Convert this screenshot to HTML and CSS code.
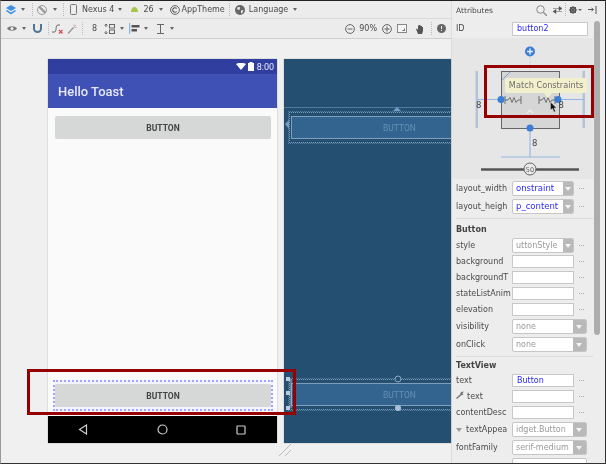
FILE: index.html
```html
<!DOCTYPE html>
<html lang="en">
<head>
    <meta charset="UTF-8">
    <meta name="viewport" content="width=device-width, initial-scale=1.0">
    <title>Layout Editor</title>
    <link rel="stylesheet" href="styles.css">
</head>
<body>
<div class="app">
    <div class="main">
        <div class="toolbar">
            <svg class="ml5" width="10" height="10" viewBox="0 0 10 10"><path d="M5 0L10 3 5 6 0 3z" fill="#3d8fe0"/><path d="M1 5L5 7.4 9 5 10 6 5 9.5 0 6z" fill="#3d8fe0"/></svg>
            <i class="caret ml5"></i>
            <i class="sep ml7"></i>
            <svg class="ml4" width="10" height="10" viewBox="0 0 10 10"><circle cx="5" cy="5" r="4.5" fill="none" stroke="#999"/><path d="M2 1.500L8.500 8" stroke="#999" stroke-width="2.400"/></svg>
            <i class="caret ml6"></i>
            <i class="sep ml6"></i>
            <svg class="ml6" width="7" height="11" viewBox="0 0 7 11"><rect x=".5" y=".5" width="6" height="10" rx="1" fill="#eee" stroke="#777"/></svg>
            <span class="ml5">Nexus 4</span>
            <i class="caret ml4"></i>
            <svg class="ml9" width="7" height="5" viewBox="0 0 7 5"><path d="M0 5C0 2 1.500 0 3.500 0S7 2 7 5z" fill="#a6c648"/></svg>
            <span class="ml5">26</span>
            <i class="caret ml5"></i>
            <svg class="ml7" width="10" height="10" viewBox="0 0 10 10"><circle cx="5" cy="5" r="4.400" fill="none" stroke="#666"/><path d="M6.700 3.500A2.300 2.300 0 1 0 6.700 6.500" fill="none" stroke="#555" stroke-width="1.100"/></svg>
            <span class="ml2">AppTheme</span>
            <i class="sep ml4"></i>
            <svg class="ml5" width="10" height="10" viewBox="0 0 10 10"><circle cx="5" cy="5" r="5" fill="#666"/><path d="M2 2.500L5 2 4.500 5 2.500 4.500zM6 5.500L8.500 5 7 8.500 6 8z" fill="#eee"/></svg>
            <span class="ml4">Language</span>
            <i class="caret ml5"></i>
        </div>
        <div class="toolbar toolbar-second">
            <svg class="ml6" width="10" height="7" viewBox="0 0 10 7"><path d="M0 3.500C2 .5 8 .5 10 3.500 8 6.500 2 6.500 0 3.500z" fill="#777"/><circle cx="5" cy="3.500" r="1.500" fill="#eee"/></svg>
            <i class="caret ml5"></i>
            <svg class="ml7" width="9" height="9" viewBox="0 0 9 9"><path d="M1 0V4.500A3.500 3.500 0 0 0 8 4.500V0" fill="none" stroke="#4d7596" stroke-width="2"/></svg>
            <i class="sep ml6"></i>
            <svg class="ml3" width="11" height="11" viewBox="0 0 11 11"><path d="M0 9H2.500C5 9 3 2 6 2H8" fill="none" stroke="#666"/><path d="M7 7L10.500 10.500M10.500 7L7 10.500" stroke="#d9494f" stroke-width="1.200"/></svg>
            <svg class="ml4" width="10" height="10" viewBox="0 0 10 10"><path d="M1 9.500L6.500 3.500" stroke="#999" stroke-width="1.400"/><path d="M7 .5V2.500M9.500 3.500H7.500M9 1L7.500 2.500" stroke="#c8a8a0"/></svg>
            <i class="sep ml5"></i>
            <span class="ml9">8</span>
            <svg class="ml7" width="11" height="10" viewBox="0 0 11 10"><path d="M2 0V3M.5 1.500L2 0 3.500 1.500M2 10V7M.5 8.500L2 10 3.500 8.500" fill="none" stroke="#666"/><rect x="5.500" y=".5" width="5" height="3.500" fill="none" stroke="#666"/><rect x="5.500" y="6" width="5" height="3.500" fill="none" stroke="#666"/></svg>
            <i class="caret ml5"></i>
            <svg class="ml5" width="11" height="11" viewBox="0 0 11 11"><path d="M.5 0V11" stroke="#86b7e0" stroke-width="1.400"/><path d="M2.500 2H10.500V4.500H2.500zM2.500 6H8V8.500H2.500z" fill="#555"/></svg>
            <i class="caret ml4"></i>
            <svg class="ml9" width="7" height="10" viewBox="0 0 7 10"><path d="M0 .5H7M0 9.500H7M3.500 .5V9.500" stroke="#666"/></svg>
            <i class="caret ml6"></i>
            <div class="zoom-tools">
                <svg width="10" height="10" viewBox="0 0 10 10"><circle cx="5" cy="5" r="4.400" fill="none" stroke="#666"/><path d="M2.500 5H7.500" stroke="#666"/></svg>
                <span class="ml4">90%</span>
                <svg class="ml5" width="10" height="10" viewBox="0 0 10 10"><circle cx="5" cy="5" r="4.400" fill="none" stroke="#666"/><path d="M2.500 5H7.500M5 2.500V7.500" stroke="#666"/></svg>
                <svg class="ml5" width="10" height="9" viewBox="0 0 10 9"><rect x=".5" y=".5" width="9" height="8" fill="#f6f6f6" stroke="#888"/><path d="M5.500 6.500H7.500V4.500" fill="none" stroke="#666"/></svg>
                <svg class="ml8" width="10" height="10" viewBox="0 0 10 10"><path d="M1 5L2 4.500 3 6V1.500H4V1H5V1.500H6V2H7V3H8V7L7 10H3z" fill="#555"/></svg>
                <i class="sep ml6"></i>
                <svg class="ml5" width="9" height="9" viewBox="0 0 9 9"><circle cx="4.500" cy="4.500" r="4.500" fill="#666"/><path d="M4.500 2V5M4.500 6V7" stroke="#eee"/></svg>
            </div>
        </div>
        <div class="canvas">
            <div class="phone">
                <div class="status-bar">
                    <svg width="10" height="7" viewBox="0 0 10 7"><path d="M0 1C3 -.5 7 -.5 10 1L5 7z" fill="#fff"/></svg>
                    <svg class="battery" width="6" height="9" viewBox="0 0 6 9"><path d="M1.500 0H4.500V1H6V9H0V1H1.500z" fill="#fff"/></svg>
                    <span>8:00</span>
                </div>
                <div class="app-bar">Hello Toast</div>
                <div class="screen">
                    <div class="android-button">BUTTON</div>
                    <div class="selection">
                        <div class="android-button">BUTTON</div>
                    </div>
                </div>
                <div class="nav-bar">
                    <svg width="10" height="11" viewBox="0 0 10 11"><path d="M8.500 1V10L1.500 5.500z" fill="none" stroke="#ccc" stroke-width="1.200"/></svg>
                    <svg width="11" height="11" viewBox="0 0 11 11"><circle cx="5.500" cy="5.500" r="4.500" fill="none" stroke="#ccc" stroke-width="1.200"/></svg>
                    <svg width="10" height="10" viewBox="0 0 10 10"><rect x="1" y="1" width="8" height="8" rx=".5" fill="none" stroke="#ccc" stroke-width="1.200"/></svg>
                </div>
            </div>
            <div class="blueprint">
                <div class="bp-top-line"></div>
                <div class="bp-button bp-button-top">BUTTON</div>
                <div class="bp-button bp-button-bottom">BUTTON</div>
                <svg class="bp-marks" width="167" height="382" viewBox="0 0 167 382">
                    <path d="M113 48L109 52H117zM1 65L5 61V70z" fill="#6f9fc8"/>
                    <circle cx="114" cy="320" r="3" fill="#244f70" stroke="#8aa8c4"/>
                    <circle cx="114" cy="349" r="3" fill="#a9c0d6"/>
                    <path d="M7 320V349" stroke="#9db6cd"/>
                    <rect x="2" y="318" width="4" height="4" fill="#b9cbdc"/>
                    <rect x="2" y="332" width="4" height="4" fill="#b9cbdc"/>
                    <rect x="2" y="347" width="4" height="4" fill="#b9cbdc"/>
                </svg>
            </div>
            <svg class="grip" width="13" height="13" viewBox="0 0 13 13"><path d="M0 12L12 0M6 12L12 6" stroke="#bbb"/></svg>
        </div>
    </div>
    <div class="attributes">
        <div class="attr-header">
            <span>Attributes</span>
            <svg class="ml-auto" width="11" height="11" viewBox="0 0 11 11"><circle cx="4.500" cy="4.500" r="3.800" fill="none" stroke="#888"/><path d="M7.500 7.500L11 11" stroke="#888" stroke-width="1.300"/></svg>
            <svg class="ml6" width="9" height="8" viewBox="0 0 9 8"><path d="M2 5.500H9M0 5.500L3 3.500V7.500zM0 2.500H7M9 2.500L6 .5V4.500z" fill="#555" stroke="#555" stroke-width=".5"/></svg>
            <i class="sep ml3"></i>
            <svg class="ml3" width="8" height="8" viewBox="0 0 8 8"><circle cx="4" cy="4" r="2.500" fill="none" stroke="#555" stroke-width="1.600"/><path d="M4 0V8M0 4H8M1 1L7 7M7 1L1 7" stroke="#555"/></svg>
            <i class="caret caret-small ml1"></i>
            <svg class="ml6" width="9" height="9" viewBox="0 0 9 9"><path d="M0 3.500H5M3.500 2L5.500 3.500 3.500 5M8 0V8" fill="none" stroke="#555"/></svg>
        </div>
        <div class="attr-body">
            <div class="attr-fields">
                <div class="id-row">
                    <span class="label">ID</span>
                    <div class="field field-id">button2</div>
                </div>
                <div class="widget">
                    <svg width="141" height="141" viewBox="0 0 141 141">
                        <path d="M24.500 33V90M131.500 33V90" stroke="#d4d4d4" stroke-width="3"/>
                        <path d="M25 33V90M132 33V90M25 61.500H49M106 61.500H132M78 90V119M49 119H108" stroke="#94b6e4" stroke-width="1.100" fill="none"/>
                        <path d="M78 19V33" stroke="#a8c4e6" stroke-dasharray="1 1.500"/>
                        <circle cx="78" cy="13.500" r="5" fill="#3b7ed6"/>
                        <path d="M75 13.500H81M78 10.500V16.500" stroke="#e8eef8" stroke-width="1.400"/>
                        <rect x="49.500" y="33.500" width="58" height="57" fill="#d6d6d6" stroke="#666"/>
                        <path d="M50 42L58 34" stroke="#7aa5dc"/>
                        <path d="M75 75L78 72 81 75" fill="none" stroke="#f0f0f0" stroke-width="1.200"/>
                        <path d="M53 58V66M53 62H56L58 59.500 60 64.500 62 59.500 64 64.500 66 62H69M69 58V66M87 58V66M87 62H90L92 59.500 94 64.500 96 59.500 98 64.500 100 62H103M103 58V66" fill="none" stroke="#555" stroke-width=".8"/>
                        <circle cx="49" cy="61.500" r="3.500" fill="#3b7ed6"/>
                        <circle cx="106" cy="61.500" r="3.500" fill="#3b7ed6"/>
                        <circle cx="78" cy="90" r="3.500" fill="#3b7ed6"/>
                        <text x="24" y="70" class="widget-num">8</text>
                        <text x="106.500" y="70" class="widget-num">8</text>
                        <text x="80" y="108" class="widget-num">8</text>
                        <path d="M29 131.500H127" stroke="#555" stroke-width="2.400"/>
                        <circle cx="78" cy="131" r="6" fill="#e8e8e8" stroke="#666"/>
                        <text x="78" y="133.500" class="widget-slider">50</text>
                    </svg>
                </div>
                <div class="row row-select">
                    <span class="label">layout_width</span>
                    <div class="select select-short"><span class="value">onstraint</span><i class="select-arrow"></i></div>
                    <i class="more"></i>
                </div>
                <div class="row row-select">
                    <span class="label">layout_heigh</span>
                    <div class="select select-short"><span class="value">p_content</span><i class="select-arrow"></i></div>
                    <i class="more"></i>
                </div>
                <div class="divider"></div>
                <div class="heading">Button</div>
                <div class="row">
                    <span class="label">style</span>
                    <div class="select select-short"><span class="value value-gray">uttonStyle</span><i class="select-arrow"></i></div>
                    <i class="more"></i>
                </div>
                <div class="row">
                    <span class="label">background</span>
                    <div class="field"></div>
                    <i class="more"></i>
                </div>
                <div class="row">
                    <span class="label">backgroundT</span>
                    <div class="field"></div>
                    <i class="more"></i>
                </div>
                <div class="row">
                    <span class="label">stateListAnim</span>
                    <div class="field"></div>
                    <i class="more"></i>
                </div>
                <div class="row">
                    <span class="label">elevation</span>
                    <div class="field"></div>
                    <i class="more"></i>
                </div>
                <div class="row row-select">
                    <span class="label">visibility</span>
                    <div class="select"><span class="value value-gray">none</span><i class="select-arrow"></i></div>
                </div>
                <div class="row row-select">
                    <span class="label">onClick</span>
                    <div class="select"><span class="value value-gray">none</span><i class="select-arrow"></i></div>
                </div>
                <div class="divider"></div>
                <div class="heading heading-tight">TextView</div>
                <div class="row">
                    <span class="label">text</span>
                    <div class="field field-blue">Button</div>
                    <i class="more"></i>
                </div>
                <div class="row">
                    <span class="label"><svg class="wrench" width="8" height="8" viewBox="0 0 8 8"><path d="M0 7L4 3.500 5 1 8 .5 6.500 2.500 7.500 3.500 5 4.500 1 8z" fill="#777"/></svg>text</span>
                    <div class="field"></div>
                    <i class="more"></i>
                </div>
                <div class="row">
                    <span class="label">contentDesc</span>
                    <div class="field"></div>
                    <i class="more"></i>
                </div>
                <div class="row row-select">
                    <span class="label"><i class="tree-arrow"></i>textAppea</span>
                    <div class="select"><span class="value value-gray">idget.Button</span><i class="select-arrow"></i></div>
                </div>
                <div class="row row-select">
                    <span class="label">fontFamily</span>
                    <div class="select"><span class="value value-gray">serif-medium</span><i class="select-arrow"></i></div>
                </div>
                <div class="row row-select">
                    <div class="spacer-label"></div>
                    <div class="select"></div>
                </div>
            </div>
            <div class="scrollbar"><div class="scroll-thumb"></div></div>
        </div>
    </div>
    <div class="callout callout-widget"></div>
    <div class="callout callout-button"></div>
    <div class="tooltip">Match Constraints</div>
    <svg class="cursor" width="7" height="10" viewBox="0 0 7 10"><path d="M.5 0V8L2.500 6.500 4 10 5.500 9.300 4 6H6.500z" fill="#111" stroke="#eee" stroke-width=".4"/></svg>
</div>
</body>
</html>
```

FILE: styles.css
```css
html, body {
    margin: 0;
    padding: 0;
}
body {
    width: 606px;
    height: 464px;
    overflow: hidden;
    font-family: "DejaVu Sans", sans-serif;
    font-size: 8px;
    color: #4a4a4a;
}
.app {
    position: relative;
    display: flex;
    box-sizing: border-box;
    width: 606px;
    height: 464px;
    background: #f0f0f0;
    border-top: 1px solid #222;
    border-bottom: 1px solid #333;
    border-left: 1px solid #999;
    border-right: 1px solid #333;
    filter: blur(0.35px);
}
.main {
    display: flex;
    flex-direction: column;
    width: 450px;
    flex-shrink: 0;
}

/* toolbars */
.toolbar {
    display: flex;
    align-items: center;
    flex-shrink: 0;
    height: 17px;
    background: #ececec;
    border-bottom: 1px solid #dadada;
    box-sizing: content-box;
}
.toolbar-second {
    height: 19px;
    border-bottom-color: #cfcfcf;
}
.zoom-tools {
    display: flex;
    align-items: center;
    margin-left: auto;
    margin-right: 5px;
}
.caret {
    width: 0;
    height: 0;
    border-left: 2.5px solid transparent;
    border-right: 2.5px solid transparent;
    border-top: 3px solid #666;
}
.caret-small {
    border-left-width: 2px;
    border-right-width: 2px;
    border-top-width: 2px;
}
.sep {
    width: 1px;
    height: 14px;
    background-image: linear-gradient(#bbb 50%, transparent 50%);
    background-size: 1px 2px;
}
.ml1 { margin-left: 1px; }
.ml2 { margin-left: 2px; }
.ml3 { margin-left: 3px; }
.ml4 { margin-left: 4px; }
.ml5 { margin-left: 5px; }
.ml6 { margin-left: 6px; }
.ml7 { margin-left: 7px; }
.ml8 { margin-left: 8px; }
.ml9 { margin-left: 9px; }
.ml-auto { margin-left: auto; }

/* canvas */
.canvas {
    position: relative;
    display: flex;
    flex: 1;
    gap: 7px;
    padding: 20px 0 20px 47px;
    min-height: 0;
}
.phone {
    display: flex;
    flex-direction: column;
    width: 229px;
    flex-shrink: 0;
    font-family: Roboto, sans-serif;
    box-shadow: 0 0 1px #888;
}
.status-bar {
    display: flex;
    align-items: center;
    justify-content: flex-end;
    gap: 2px;
    height: 15px;
    padding-right: 3px;
    background: #303f9f;
    color: #e8e8f4;
    font-size: 9px;
}
.battery {
    margin-right: 1px;
}
.app-bar {
    display: flex;
    align-items: center;
    height: 34px;
    padding-left: 10px;
    background: #3f51b5;
    color: #e6e8f6;
    font-size: 13px;
    font-weight: 500;
}
.screen {
    display: flex;
    flex-direction: column;
    justify-content: space-between;
    flex: 1;
    padding: 8px 6px 5px 7px;
    background: #fafafa;
}
.android-button {
    display: flex;
    align-items: center;
    justify-content: center;
    height: 23px;
    background: #d6d7d7;
    border-radius: 2px;
    color: #444;
    font-size: 8.500px;
    font-weight: 700;
}
.selection {
    margin: 0 -2px;
    padding: 2px 0;
    border: 2px dotted #a2a2ff;
    background: #f4f4ff;
}
.nav-bar {
    display: flex;
    align-items: center;
    justify-content: space-between;
    height: 27px;
    padding: 0 31px 0 30px;
    background: #000;
}
.blueprint {
    position: relative;
    flex: 1;
    overflow: hidden;
    background: #244f70;
    font-family: Roboto, sans-serif;
    box-shadow: 0 0 1px #888;
}
.bp-top-line {
    height: 1px;
    margin-top: 48px;
    background: #4f7b9d;
}
.bp-button {
    position: absolute;
    left: 7px;
    right: -10px;
    display: flex;
    align-items: center;
    box-sizing: border-box;
    height: 23px;
    padding-left: 91px;
    background: #32648f;
    border: 1px solid #7f9fbc;
    color: #6590b6;
    font-size: 8.500px;
}
.bp-button::before {
    content: "";
    position: absolute;
    left: -3px;
    right: 0;
    top: -5px;
    bottom: -5px;
    border: 1px dotted #7d9fbc;
    outline: 1px dotted #55809f;
}
.bp-button-top {
    top: 57px;
}
.bp-button-bottom {
    top: 324px;
}
.bp-marks {
    position: absolute;
    left: 0;
    top: 0;
}
.grip {
    position: absolute;
    left: 278px;
    bottom: 6px;
}

/* attributes panel */
.attributes {
    display: flex;
    flex-direction: column;
    flex: 1;
    min-width: 0;
    border-left: 1px solid #dcdcdc;
    background: #ededed;
}
.attr-header {
    display: flex;
    align-items: center;
    flex-shrink: 0;
    height: 18px;
    padding: 0 8px 0 4px;
    font-size: 7.500px;
}
.attr-body {
    display: flex;
    flex: 1;
    min-height: 0;
}
.attr-fields {
    width: 141px;
    overflow: hidden;
    flex-shrink: 0;
}
.id-row {
    display: flex;
    align-items: center;
    height: 19px;
}
.label {
    display: block;
    flex-shrink: 0;
    box-sizing: border-box;
    width: 60px;
    padding-left: 4px;
    overflow: hidden;
    white-space: nowrap;
}
.widget {
    height: 141px;
    background: #e6e6e6;
}
.widget svg {
    display: block;
}
.widget-num {
    fill: #444;
    font-size: 8.500px;
}
.widget-slider {
    fill: #666;
    font-size: 6.500px;
    text-anchor: middle;
}
.row {
    display: flex;
    align-items: center;
    height: 16px;
}
.row-select {
    height: 18px;
}
.spacer-label {
    width: 60px;
    flex-shrink: 0;
}
.field {
    box-sizing: border-box;
    width: 62px;
    height: 13px;
    padding-left: 4px;
    background: #fff;
    border: 1px solid #c8c8c8;
    color: #2a2aff;
    line-height: 11px;
}
.field-id {
    width: 76px;
    height: 14px;
    line-height: 12px;
}
.select {
    display: flex;
    box-sizing: border-box;
    width: 75px;
    height: 15px;
    overflow: hidden;
    background: #fff;
    border: 1px solid #c6c6c6;
    border-radius: 2px;
}
.select-short {
    width: 62px;
}
.select-arrow {
    position: relative;
    width: 13px;
    flex-shrink: 0;
    background: #b9b9b9;
}
.select-arrow::after {
    content: "";
    position: absolute;
    left: 3px;
    top: 5px;
    border-left: 3px solid transparent;
    border-right: 3px solid transparent;
    border-top: 4px solid #f4f4f4;
}
.select-short .select-arrow {
    width: 10px;
}
.select-short .select-arrow::after {
    left: 2px;
}
.value {
    display: flex;
    flex: 1;
    min-width: 0;
    padding-left: 3px;
    overflow: hidden;
    align-items: center;
    white-space: nowrap;
    color: #2a2aff;
    font-size: 8.500px;
}
.value-gray {
    color: #999;
    font-size: 8px;
}
.more {
    width: 5px;
    height: 1px;
    margin-left: 5px;
    background-image: linear-gradient(90deg, #aaa 50%, transparent 50%);
    background-size: 2px 1px;
}
.divider {
    height: 1px;
    margin: 3px 0 3px 4px;
    background: #dcdcdc;
}
.heading {
    height: 15px;
    padding-left: 4px;
    font-weight: bold;
    line-height: 15px;
    color: #444;
}
.heading-tight {
    height: 12px;
    line-height: 12px;
}
.wrench {
    margin-right: 3px;
}
.tree-arrow {
    display: inline-block;
    margin-right: 4px;
    border-left: 3px solid transparent;
    border-right: 3px solid transparent;
    border-top: 4px solid #999;
}
.scrollbar {
    flex: 1;
    padding-left: 1px;
}
.scroll-thumb {
    width: 6px;
    height: 314px;
    margin-top: 2px;
    background: #adadad;
    border-radius: 3px;
}

/* overlays */
.callout {
    position: absolute;
    box-sizing: border-box;
    border: 3px solid #950000;
}
.callout-widget {
    left: 483px;
    top: 64px;
    width: 110px;
    height: 53px;
}
.callout-button {
    left: 26px;
    top: 368px;
    width: 269px;
    height: 46px;
}
.tooltip {
    position: absolute;
    left: 504px;
    top: 77px;
    box-sizing: border-box;
    width: 82px;
    height: 15px;
    background: #f2f0cc;
    border-radius: 2px;
    color: #6e6e6e;
    font-size: 8.200px;
    line-height: 15px;
    text-align: center;
    white-space: nowrap;
}
.tooltip::after {
    content: "";
    position: absolute;
    left: 39px;
    top: 15px;
    border-left: 4px solid transparent;
    border-right: 4px solid transparent;
    border-top: 5px solid #f2f0cc;
}
.cursor {
    position: absolute;
    left: 549px;
    top: 101px;
}
```
